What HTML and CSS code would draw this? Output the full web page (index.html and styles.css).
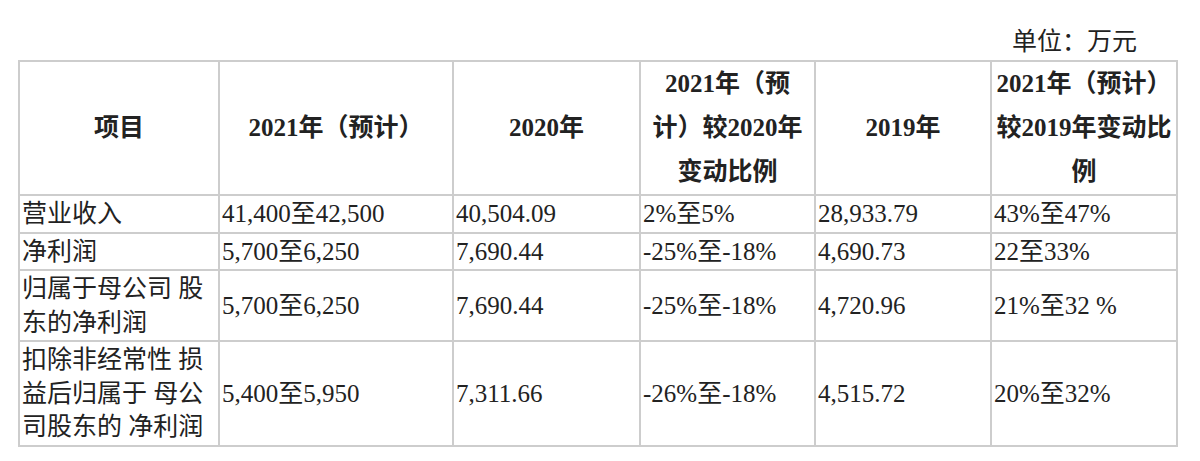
FILE: index.html
```html
<!DOCTYPE html>
<html lang="zh-CN">
<head>
<meta charset="utf-8">
<title>业绩预告</title>
<link rel="stylesheet" href="styles.css">
</head>
<body>
<div class="page">
  <div class="unit">单位：万元</div>
  <table class="report">
    <colgroup>
      <col class="c1"><col class="c2"><col class="c3"><col class="c4"><col class="c5"><col class="c6">
    </colgroup>
    <thead>
      <tr>
        <th>项目</th>
        <th>2021年（预计）</th>
        <th>2020年</th>
        <th>2021年（预<br>计）较2020年<br>变动比例</th>
        <th>2019年</th>
        <th>2021年（预计）<br>较2019年变动比<br>例</th>
      </tr>
    </thead>
    <tbody>
      <tr>
        <td>营业收入</td>
        <td>41,400至42,500</td>
        <td>40,504.09</td>
        <td>2%至5%</td>
        <td>28,933.79</td>
        <td>43%至47%</td>
      </tr>
      <tr>
        <td>净利润</td>
        <td>5,700至6,250</td>
        <td>7,690.44</td>
        <td>-25%至-18%</td>
        <td>4,690.73</td>
        <td>22至33%</td>
      </tr>
      <tr>
        <td>归属于母公司 股<br>东的净利润</td>
        <td>5,700至6,250</td>
        <td>7,690.44</td>
        <td>-25%至-18%</td>
        <td>4,720.96</td>
        <td>21%至32 %</td>
      </tr>
      <tr>
        <td>扣除非经常性 损<br>益后归属于 母公<br>司股东的 净利润</td>
        <td>5,400至5,950</td>
        <td>7,311.66</td>
        <td>-26%至-18%</td>
        <td>4,515.72</td>
        <td>20%至32%</td>
      </tr>
    </tbody>
  </table>
</div>
</body>
</html>
```
FILE: styles.css
```css
html, body {
  margin: 0;
  padding: 0;
  background: #ffffff;
}

body {
  font-family: "Liberation Serif", "Noto Sans CJK SC", serif;
  color: #222222;
  font-size: 25px;
}

.page {
  padding: 0 0 0 18px;
}

.unit {
  width: 1158px;
  box-sizing: border-box;
  text-align: right;
  padding: 24px 39px 0 0;
  height: 60px;
  line-height: 36px;
}

.report {
  border-collapse: collapse;
  table-layout: fixed;
  width: 1158px;
}

.c1 { width: 200px; }
.c2 { width: 234px; }
.c3 { width: 187px; }
.c4 { width: 175px; }
.c5 { width: 176px; }
.c6 { width: 186px; }

.report th,
.report td {
  border: 2px solid #cdcdcd;
  vertical-align: middle;
}

.report th {
  font-weight: 700;
  text-align: center;
  line-height: 44px;
  padding: 0;
}

.report td {
  text-align: left;
  line-height: 33.5px;
  padding: 1px 2px;
  white-space: nowrap;
}
```
